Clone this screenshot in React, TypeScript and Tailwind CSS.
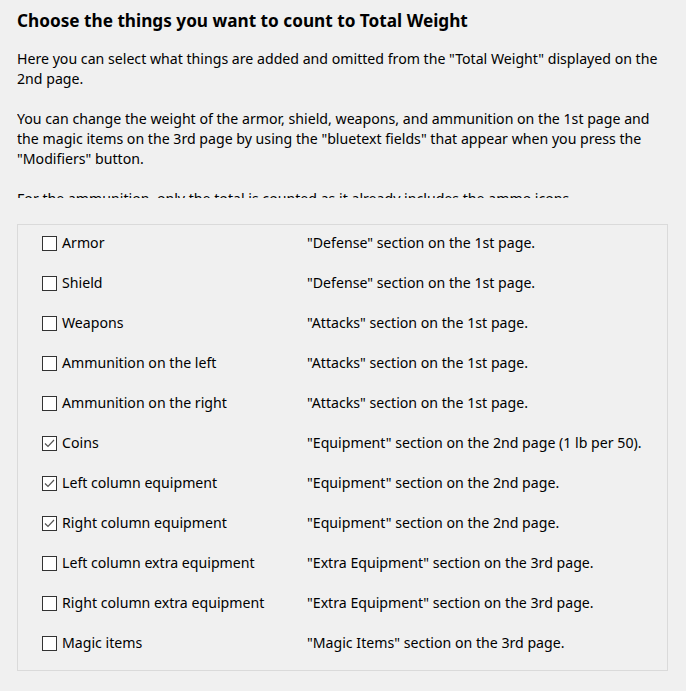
const rows: { label: string; desc: string; checked: boolean }[] = [
  { label: 'Armor', desc: '"Defense" section on the 1st page.', checked: false },
  { label: 'Shield', desc: '"Defense" section on the 1st page.', checked: false },
  { label: 'Weapons', desc: '"Attacks" section on the 1st page.', checked: false },
  { label: 'Ammunition on the left', desc: '"Attacks" section on the 1st page.', checked: false },
  { label: 'Ammunition on the right', desc: '"Attacks" section on the 1st page.', checked: false },
  { label: 'Coins', desc: '"Equipment" section on the 2nd page (1 lb per 50).', checked: true },
  { label: 'Left column equipment', desc: '"Equipment" section on the 2nd page.', checked: true },
  { label: 'Right column equipment', desc: '"Equipment" section on the 2nd page.', checked: true },
  { label: 'Left column extra equipment', desc: '"Extra Equipment" section on the 3rd page.', checked: false },
  { label: 'Right column extra equipment', desc: '"Extra Equipment" section on the 3rd page.', checked: false },
  { label: 'Magic items', desc: '"Magic Items" section on the 3rd page.', checked: false },
]

function Checkbox({ checked }: { checked: boolean }) {
  return (
    <span className="w-[15px] h-[15px] border border-[#333333] bg-white flex items-center justify-center shrink-0">
      {checked && (
        <svg width="11" height="9" viewBox="0 0 11 9" fill="none">
          <path d="M1 4.5 L4 7.5 L10 1" stroke="#555555" strokeWidth="1.2" />
        </svg>
      )}
    </span>
  )
}

export default function App() {
  return (
    <div
      className="w-[686px] h-[691px] bg-[#f0f0f0] text-black overflow-hidden"
      style={{ fontFamily: '"Noto Sans", "Open Sans", sans-serif' }}
    >
      <div className="pl-[17px] pr-[20px]">
        <h1 className="text-[17.2px] font-bold leading-[24px] pt-[9px]">
          Choose the things you want to count to Total Weight
        </h1>

        {/* scrolled help text, clipped at the bottom */}
        <div className="mt-[16px] h-[149px] overflow-hidden text-[14.15px] leading-[20px]">
          <p className="mb-[20px]">
            Here you can select what things are added and omitted from the "Total Weight" displayed on the 2nd page.
          </p>
          <p className="mb-[20px]">
            You can change the weight of the armor, shield, weapons, and ammunition on the 1st page and the magic items on
            the 3rd page by using the "bluetext fields" that appear when you press the "Modifiers" button.
          </p>
          <p>For the ammunition, only the total is counted as it already includes the ammo icons.</p>
        </div>
      </div>

      <div className="ml-[17px] mt-[26px] w-[651px] h-[447px] border border-[#dadada] pt-[8px] pl-[24px] flex flex-col gap-[20px] text-[14.15px]">
        {rows.map((r) => (
          <div key={r.label} className="h-[20px] flex items-center">
            <div className="w-[265px] flex items-center gap-[5px]">
              <Checkbox checked={r.checked} />
              <span className="leading-[20px]">{r.label}</span>
            </div>
            <span className="leading-[20px]">{r.desc}</span>
          </div>
        ))}
      </div>
    </div>
  )
}
